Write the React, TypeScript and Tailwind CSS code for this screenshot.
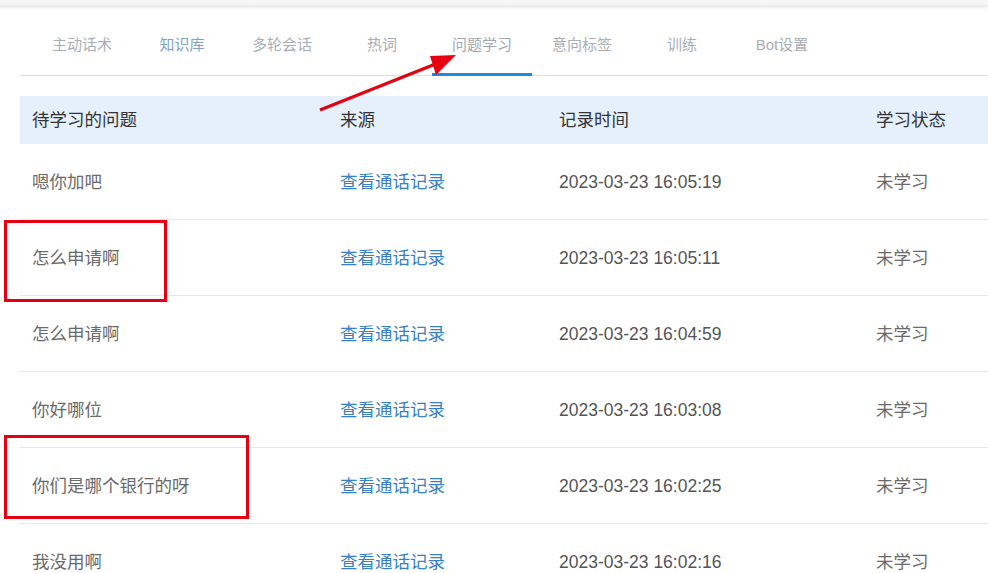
const tabs = ['主动话术', '知识库', '多轮会话', '热词', '问题学习', '意向标签', '训练', 'Bot设置'];

const rows = [
  { q: '嗯你加吧', time: '2023-03-23 16:05:19' },
  { q: '怎么申请啊', time: '2023-03-23 16:05:11' },
  { q: '怎么申请啊', time: '2023-03-23 16:04:59' },
  { q: '你好哪位', time: '2023-03-23 16:03:08' },
  { q: '你们是哪个银行的呀', time: '2023-03-23 16:02:25' },
  { q: '我没用啊', time: '2023-03-23 16:02:16' },
];

const cols = 'grid grid-cols-[308px_219px_317px_1fr]';

export default function App() {
  return (
    <div
      className="relative h-[573px] w-[988px] overflow-hidden bg-white"
      style={{ fontFamily: '"Liberation Sans", "Noto Sans CJK SC", sans-serif' }}
    >
      {/* top shadow */}
      <div className="h-[5px] bg-[#f6f6f7]" />
      <div className="h-[5px] bg-gradient-to-b from-[#e6e7ea] to-white" />

      {/* tabs */}
      <div className="ml-5 flex h-[66px] border-b border-[#dcdee1] pl-3">
        {tabs.map((t) => {
          const active = t === '问题学习';
          return (
            <div
              key={t}
              className={`-mb-px flex w-[100px] items-center justify-center border-b-[3px] pt-[5px] text-[15px] leading-none ${
                active ? 'border-[#1e8ae6] text-[#a3a8ae]' : 'border-transparent'
              } ${t === '知识库' ? 'text-[#7fa2c3]' : active ? '' : 'text-[#a9aeb4]'}`}
            >
              {t}
            </div>
          );
        })}
      </div>

      {/* table */}
      <div className="mt-5 ml-5">
        <div className={`${cols} h-12 items-center bg-[#e6f0fb] text-[17.5px] text-[#333]`}>
          <div className="pl-3">待学习的问题</div>
          <div className="pl-3">来源</div>
          <div className="pl-3">记录时间</div>
          <div className="pl-3">学习状态</div>
        </div>
        {rows.map((r, i) => (
          <div
            key={i}
            className={`${cols} h-[76px] items-center border-b border-[#e8e8e8] pt-px text-[17.5px] text-[#6a6a6a]`}
          >
            <div className="pl-3">{r.q}</div>
            <div className="pl-3 text-[#3a80c5]">查看通话记录</div>
            <div className="pl-3 text-[#555]">{r.time}</div>
            <div className="pl-3">未学习</div>
          </div>
        ))}
      </div>

      {/* annotations */}
      <div className="absolute left-[4px] top-[220px] h-[82px] w-[163px] border-[3px] border-[#e60012]" />
      <div className="absolute left-[4px] top-[435px] h-[84px] w-[245px] border-[3px] border-[#e60012]" />
      <svg className="absolute left-0 top-0" width="988" height="573" viewBox="0 0 988 573">
        <line x1="320" y1="110" x2="438" y2="63" stroke="#e60012" strokeWidth="3" />
        <polygon points="456,55 430,56 436,75" fill="#e60012" />
      </svg>
    </div>
  );
}
